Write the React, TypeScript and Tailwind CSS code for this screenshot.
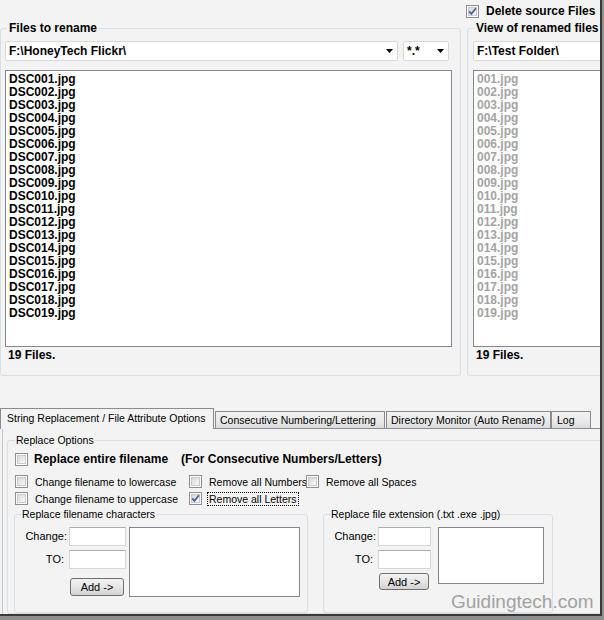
import type { ReactNode } from "react";

const sourceFiles = Array.from({ length: 19 }, (_, i) => `DSC${String(i + 1).padStart(3, "0")}.jpg`);
const renamedFiles = Array.from({ length: 19 }, (_, i) => `${String(i + 1).padStart(3, "0")}.jpg`);

// Vista-style checkbox: grey frame, soft gradient well, blue tick
function CheckBox({ checked = false }: { checked?: boolean }) {
  return (
    <span className="relative flex h-[13px] w-[13px] shrink-0 items-center justify-center border border-[#8e8f8f] bg-white">
      <span className="h-[9px] w-[9px] border border-[#c9cacb] bg-linear-to-br from-[#d6d7d8] to-[#fafafa]" />
      {checked && (
        <svg className="absolute left-0 top-0" width="11" height="11" viewBox="0 0 11 11">
          <path d="M2.2 5.4 L4.4 7.9 L8.9 2.2" fill="none" stroke="#4b5d96" strokeWidth="1.7" />
        </svg>
      )}
    </span>
  );
}

function Combo({ text, className }: { text: string; className: string }) {
  return (
    <div
      className={`flex h-[20px] shrink-0 items-center justify-between rounded-[2px] border border-[#d9d9d9] bg-white pl-[3px] pr-[4px] text-[12px] font-bold leading-[14px] ${className}`}
    >
      <span className="whitespace-nowrap">{text}</span>
      <svg width="7" height="4" viewBox="0 0 7 4" className="shrink-0">
        <polygon points="0,0 7,0 3.5,4" fill="#000" />
      </svg>
    </div>
  );
}

function ListBox({ items, muted, className }: { items: string[]; muted?: boolean; className: string }) {
  return (
    <div className={`mt-[9px] h-[277px] shrink-0 border border-[#828790] bg-white pl-[3px] pt-[2px] ${className}`}>
      {items.map((f) => (
        <div key={f} className={`text-[12px] font-bold leading-[13px] ${muted ? "text-[#a3a3a3]" : "text-black"}`}>
          {f}
        </div>
      ))}
    </div>
  );
}

function Option({ label, checked, focused }: { label: string; checked?: boolean; focused?: boolean }) {
  return (
    <div className="flex h-[13px] items-center">
      <CheckBox checked={checked} />
      <span
        className={`ml-[5px] whitespace-nowrap px-px text-[10.5px] leading-[12px] ${
          focused ? "border border-dotted border-black" : "border border-transparent"
        }`}
      >
        {label}
      </span>
    </div>
  );
}

function TextBox({ className }: { className: string }) {
  return <div className={`h-[19px] border border-[#d3d6da] border-t-[#abadb3] bg-white ${className}`} />;
}

function Button({ children, className }: { children: ReactNode; className: string }) {
  return (
    <div
      className={`flex items-center justify-center rounded-[3px] border border-[#707070] bg-linear-to-b from-[#f3f3f3] via-[#e6e6e6] to-[#d2d2d2] text-[11px] leading-[12px] ${className}`}
    >
      {children}
    </div>
  );
}

function Tab({ children, className }: { children: ReactNode; className: string }) {
  return (
    <div
      className={`h-[17px] shrink-0 border border-b-0 border-[#898c95] bg-linear-to-b from-[#f2f2f2] via-[#ebebeb] to-[#dcdcdc] pt-[2px] text-[10.5px] leading-[13px] whitespace-nowrap ${className}`}
    >
      {children}
    </div>
  );
}

export default function App() {
  return (
    <div className="h-[620px] w-[604px] bg-[#8f8f8f] font-['Liberation_Sans',Arial,sans-serif] text-black">
      <div className="relative h-[616px] w-[602px] overflow-hidden border-b-2 border-r-2 border-[#3a3a3a] bg-[#f3f3f3]">
        {/* Source / target folders */}
        <div className="flex">
          <fieldset className="mt-[21px] w-[461px] shrink-0 rounded-[3px] border border-[#d5dfe5] pb-[13px] pl-[4px] pt-[6px]">
            <legend className="ml-[2px] px-[2px] text-[12px] font-bold leading-[14px]">Files to rename</legend>
            <div className="flex gap-[5px]">
              <Combo text={"F:\\HoneyTech Flickr\\"} className="w-[393px]" />
              <Combo text="*.*" className="w-[46px] pr-[3px]" />
            </div>
            <ListBox items={sourceFiles} className="w-[447px]" />
            <div className="pl-[3px] pt-[1px] text-[12px] font-bold leading-[14px]">19 Files.</div>
          </fieldset>

          <div className="ml-[6px] w-[200px] shrink-0">
            <div className="-ml-px mt-[5px] flex h-[13px] items-center gap-[7px] text-[12px] font-bold leading-[13px]">
              <CheckBox checked />
              <span className="whitespace-nowrap">Delete source Files</span>
            </div>
            <fieldset className="mt-[3px] rounded-[3px] border border-[#d5dfe5] pb-[13px] pl-[5px] pt-[6px]">
              <legend className="ml-[1px] whitespace-nowrap px-[2px] text-[12px] font-bold leading-[14px]">
                View of renamed files
              </legend>
              <Combo text={"F:\\Test Folder\\"} className="w-[180px]" />
              <ListBox items={renamedFiles} muted className="w-[180px]" />
              <div className="pl-[3px] pt-[1px] text-[12px] font-bold leading-[14px]">19 Files.</div>
            </fieldset>
          </div>
        </div>

        {/* Tab control */}
        <div className="mt-[32px]">
          <div className="flex h-[20px] items-end">
            <div className="relative z-10 h-[21px] w-[214px] shrink-0 self-start border border-b-0 border-[#898c95] bg-[#f3f3f3] pl-[6px] pt-[3px] text-[10.5px] leading-[13px] whitespace-nowrap">
              String Replacement / File Attribute Options
            </div>
            <Tab className="ml-px w-[170px] pl-[4px]">Consecutive Numbering/Lettering</Tab>
            <Tab className="ml-px w-[165px] pl-[4px]">Directory Monitor (Auto Rename)</Tab>
            <Tab className="w-[40px] pl-[5px]">Log</Tab>
          </div>

          <div className="ml-[2px] h-[200px] border-l border-t border-[#898c95] border-l-[#c4c7cc]">
            <fieldset className="ml-[4px] mt-[5px] w-[640px] rounded-[3px] border border-[#d5dfe5] pl-[7px] pt-[6px]">
              <legend className="px-px text-[10.5px] leading-[13px]">Replace Options</legend>

              <div className="flex h-[13px] items-center">
                <CheckBox />
                <span className="ml-[6px] whitespace-nowrap text-[12px] font-bold leading-[13px]">
                  Replace entire filename
                </span>
                <span className="ml-[13px] whitespace-nowrap text-[12px] font-bold leading-[13px]">
                  (For Consecutive Numbers/Letters)
                </span>
              </div>

              <div className="mt-[9px] flex">
                <div className="w-[174px]">
                  <Option label="Change filename to lowercase" />
                </div>
                <div className="w-[117px]">
                  <Option label="Remove all Numbers" />
                </div>
                <Option label="Remove all Spaces" />
              </div>
              <div className="mt-[4px] flex">
                <div className="w-[174px]">
                  <Option label="Change filename to uppercase" />
                </div>
                <Option label="Remove all Letters" checked focused />
              </div>

              <div className="mt-[3px] flex">
                {/* Filename characters */}
                <fieldset className="-ml-px w-[294px] rounded-[3px] border border-[#d5dfe5] pb-[15px] pl-[6px] pt-[6px]">
                  <legend className="px-px text-[10.5px] leading-[13px]">Replace filename characters</legend>
                  <div className="flex">
                    <div className="grid grid-cols-[46px_57px] gap-x-[2px] gap-y-[3px] text-[11px] leading-[19px]">
                      <span className="text-right">Change:</span>
                      <TextBox className="w-[57px]" />
                      <span className="pr-[3px] text-right">TO:</span>
                      <TextBox className="w-[57px]" />
                      <span />
                      <Button className="ml-px mt-[5px] h-[18px] w-[54px]">Add -&gt;</Button>
                    </div>
                    <div className="ml-[3px] h-[70px] w-[171px] border border-[#828790] bg-white" />
                  </div>
                </fieldset>

                {/* File extension */}
                <fieldset className="ml-[15px] w-[230px] rounded-[3px] border border-[#d5dfe5] pl-[8px] pt-[6px]">
                  <legend className="-ml-[2px] px-px text-[10.5px] leading-[13px] whitespace-nowrap">
                    Replace file extension (.txt .exe .jpg)
                  </legend>
                  <div className="flex">
                    <div className="grid grid-cols-[44px_53px] gap-x-[2px] gap-y-[4px] text-[11px] leading-[19px]">
                      <span className="text-right">Change:</span>
                      <TextBox className="w-[53px]" />
                      <span className="pr-[3px] text-right">TO:</span>
                      <TextBox className="w-[53px]" />
                      <span />
                      <Button className="ml-px mt-0 h-[17px] w-[50px]">Add -&gt;</Button>
                    </div>
                    <div className="ml-[7px] h-[57px] w-[106px] border border-[#828790] bg-white" />
                  </div>
                </fieldset>
              </div>
            </fieldset>
          </div>
        </div>

        <div className="absolute left-[451px] top-[591px] text-[19px] leading-[22px] text-[#a2a2a2]">Guidingtech.com</div>
      </div>
    </div>
  );
}
